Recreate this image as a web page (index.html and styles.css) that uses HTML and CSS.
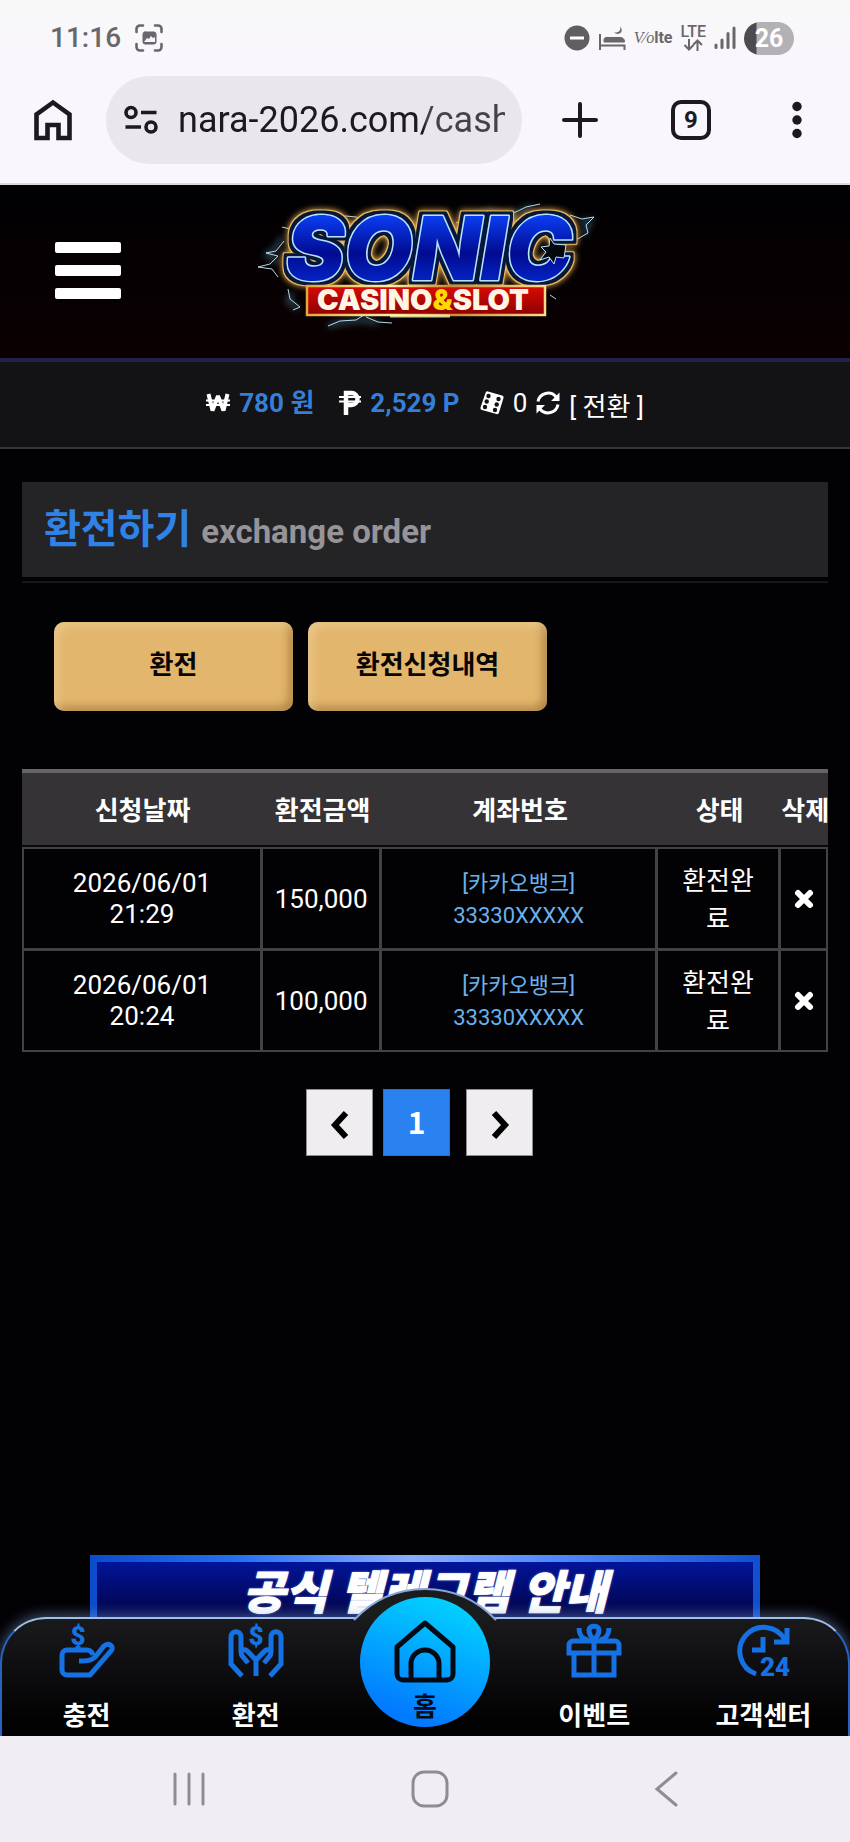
FILE: index.html
```html
<!DOCTYPE html>
<html lang="ko">
<head>
<meta charset="utf-8">
<meta name="viewport" content="width=device-width, initial-scale=1">
<title>환전하기</title>
<link rel="stylesheet" href="styles.css">
</head>
<body>
<div class="status-bar">
  <span class="clock">11:16</span>
  <svg class="capture" width="28" height="28" viewBox="0 0 28 28" fill="none" stroke="#69676b" stroke-width="2.6" stroke-linecap="round">
    <path d="M1.500 8V5a3.500 3.500 0 0 1 3.500-3.500h3M20 1.500h3A3.500 3.500 0 0 1 26.500 5v3M26.500 20v3a3.500 3.500 0 0 1-3.500 3.500h-3M8 26.500H5A3.500 3.500 0 0 1 1.500 23v-3"/>
    <rect x="8" y="8" width="13" height="12" rx="2" fill="#69676b" stroke-width="1"/>
    <path d="M9 18l3-4 2 1 2-3 2 2 2-1v5z" fill="#f8f6fa" stroke="none"/>
  </svg>
  <div class="status-icons">
    <svg width="26" height="26" viewBox="0 0 26 26"><circle cx="13" cy="13" r="12.500" fill="#605e63"/><path d="M6 13h14" stroke="#fff" stroke-width="3"/></svg>
    <svg width="28" height="26" viewBox="0 0 28 26" fill="none" stroke="#69676b" stroke-width="2"><path d="M2 9v16M2 20.500h24.500V25"/><path d="M6 17v-2.500c0-1 1-2 2-2h14c3 0 4.500 1.500 4.500 4.500z" fill="#69676b" stroke-width="1"/><path d="M22 1c1.500 4-1 7-6 6.500 4 3.500 11 0 6-6.500z" fill="#69676b" stroke="none"/></svg>
    <span class="volte"><i>V⁄o</i><b>lte</b></span>
    <span class="lte">LTE<svg width="20" height="12" viewBox="0 0 20 12" fill="none" stroke="#69676b" stroke-width="2"><path d="M6 0v10.500M1.500 6L6 10.500 10.500 6M14.500 12V1.500M10 6l4.500-4.500L19 6"/></svg></span>
    <svg width="22" height="24" viewBox="0 0 22 24" stroke="#69676b" stroke-width="3" stroke-linecap="round"><path d="M2 19v2.500M8 14v7.500M14 7.500v14M20 2v19.500"/></svg>
    <span class="battery">26</span>
  </div>
</div>
<div class="toolbar">
  <button class="tool tool-home" aria-label="홈페이지"><svg width="38" height="42" viewBox="0 0 38 42"><path d="M2.500 39V15.500L19 3.500l16.500 12V39H24.500V26h-11v13z" fill="none" stroke="#1c1a1f" stroke-width="4.600"/></svg></button>
  <div class="address">
    <svg width="34" height="28" viewBox="0 0 34 28" fill="none" stroke="#1c1a1f" stroke-width="3.600"><circle cx="7" cy="6.500" r="5"/><path d="M17 6.500h15.500M1.500 21H17"/><circle cx="27" cy="21" r="5"/></svg>
    <input class="url" type="text" aria-label="주소" value="nara-2026.com/cash">
  </div>
  <button class="tool tool-add" aria-label="새 탭"><svg width="36" height="36" viewBox="0 0 36 36"><path d="M18 2v32M2 18h32" stroke="#1c1a1f" stroke-width="4" stroke-linecap="round"/></svg></button>
  <button class="tool tool-tabs" aria-label="탭 9개"><span class="tab-count">9</span></button>
  <button class="tool tool-menu" aria-label="메뉴"><svg width="12" height="38" viewBox="0 0 12 38" fill="#1c1a1f"><circle cx="6" cy="5.500" r="4.700"/><circle cx="6" cy="19" r="4.700"/><circle cx="6" cy="32.500" r="4.700"/></svg></button>
</div>

<header class="site-header">
  <button class="burger" aria-label="전체 메뉴"><span></span><span></span><span></span></button>
  <svg class="logo" width="380" height="150" viewBox="0 0 380 150" role="img" aria-label="Sonic Casino &amp; Slot">
    <defs>
      <linearGradient id="blue" x1="0" y1="0" x2="0" y2="1"><stop offset="0.200" stop-color="#0a3cf0"/><stop offset="0.550" stop-color="#020b90"/><stop offset="0.850" stop-color="#0426cc"/></linearGradient>
      <linearGradient id="gold" x1="0" y1="0" x2="1" y2="0"><stop offset="0" stop-color="#e8a53c"/><stop offset="0.350" stop-color="#fff0a0"/><stop offset="0.600" stop-color="#c88a3a"/><stop offset="1" stop-color="#ffd98a"/></linearGradient>
      <linearGradient id="red" x1="0" y1="0" x2="0" y2="1"><stop offset="0" stop-color="#d80c04"/><stop offset="1" stop-color="#8e0000"/></linearGradient>
      <filter id="glow" x="-20%" y="-50%" width="140%" height="200%"><feGaussianBlur stdDeviation="3"/></filter>
      <filter id="outline" x="-10%" y="-20%" width="120%" height="140%" color-interpolation-filters="sRGB">
        <feMorphology in="SourceAlpha" operator="dilate" radius="3" result="d1"/>
        <feMorphology in="SourceAlpha" operator="dilate" radius="4" result="d2"/>
        <feFlood flood-color="#06173c"/><feComposite in2="d1" operator="in" result="navy"/>
        <feFlood flood-color="#f0b858"/><feComposite in2="d2" operator="in" result="rim"/>
        <feGaussianBlur in="rim" stdDeviation="3" result="halo"/>
        <feMerge><feMergeNode in="halo"/><feMergeNode in="rim"/><feMergeNode in="navy"/><feMergeNode in="SourceGraphic"/></feMerge>
      </filter>
    </defs>
    <g fill="none" stroke="#5fa5c4" stroke-width="5" opacity="0.400" filter="url(#glow)">
      <path d="M42 46l-5 10-10 8 12 8M52 102l-4 8 10 8M88 135l16-4 20-2 14 3M230 28l20-8 16 6 26-11M340 30l10 0-6 14"/>
    </g>
    <g fill="none" stroke="#c8efff" stroke-width="1" opacity="0.900">
      <path d="M42 36l8 2M44 50l-8 10-10 2 12 3-8 8-12 3 14 2 6 8M48 98l2 10 10 8-7 3M88 135l12-5 16-1 8-5M126 126l12 5 14 1M94 28l12-3 10 1 14 4M216 32l16-8 20-3 12 5 14-6 8-4 14-3M330 24l12 4 12-2-8 8 2 8-14 8M310 104l6 4"/>
    </g>
    <text class="logo-main" x="189" y="89" filter="url(#outline)">SONIC</text>
    <path d="M326 54l-12-1-4-6-1 8-8 1 5 5-6 8 9-3 5 7 2-7 8 1z" fill="#05070f" stroke="#b9e4ff" stroke-width="1"/>
    <rect x="67" y="95" width="238" height="29" fill="url(#red)" stroke="url(#gold)" stroke-width="2.500"/>
    <path d="M150 125h60" stroke="#fff6b0" stroke-width="3" opacity="0.800"/>
    <text class="logo-sub" x="183" y="119" fill="#fff5e6">CASINO<tspan fill="#ffd900">&amp;</tspan>SLOT</text>
  </svg>
</header>

<div class="wallet">
  <svg width="24" height="20" viewBox="0 0 24 20" fill="none" stroke="#fff"><path d="M2.500 1l4 16.500L12 3l5.500 14.500L21.500 1" stroke-width="4" stroke-linejoin="bevel"/><path d="M0 7.500h24M0 12h24" stroke-width="2"/></svg>
  <strong class="amount won">780 원</strong>
  <svg width="22" height="24" viewBox="0 0 22 24" fill="none" stroke="#fff"><path d="M7 24V2h5.500a5.800 5.800 0 0 1 0 12H7" stroke-width="4.500"/><path d="M0 6h22M0 10.500h22" stroke-width="2"/></svg>
  <strong class="amount point">2,529 P</strong>
  <svg class="dice" width="24" height="24" viewBox="0 0 24 24"><path d="M8 .500l14 4a2 2 0 0 1 1.500 2.500l-4.500 14.500a2 2 0 0 1-2.500 1.500L2 19a2 2 0 0 1-1.500-2.500L5.500 2A2 2 0 0 1 8 .500z" fill="#fff"/><g fill="#131214"><circle cx="8.500" cy="5" r="2.200"/><circle cx="6.700" cy="10.500" r="2.200"/><circle cx="5" cy="16" r="2.200"/><circle cx="18.500" cy="8" r="2.200"/><circle cx="16.700" cy="13.500" r="2.200"/><circle cx="15" cy="19" r="2.200"/></g></svg>
  <span>0</span>
  <svg class="refresh" width="24" height="24" viewBox="0 0 24 24" fill="none" stroke="#fff" stroke-width="3"><path d="M2 10.500A10.200 10.200 0 0 1 20 6M22 13.500A10.200 10.200 0 0 1 4 18"/><path d="M23.500 1.500v8.500H15zM.500 22.500V14H9z" fill="#fff" stroke="none"/></svg>
  <a class="convert" href="#">[ 전환 ]</a>
</div>

<main class="content">
  <div class="title-wrap"><h1 class="title">환전하기 <small>exchange order</small></h1></div>
  <div class="actions">
    <button class="gold-button">환전</button>
    <button class="gold-button">환전신청내역</button>
  </div>
  <table class="history">
    <colgroup><col class="c-date"><col class="c-sum"><col class="c-account"><col class="c-state"><col class="c-delete"></colgroup>
    <thead><tr><th>신청날짜</th><th>환전금액</th><th>계좌번호</th><th>상태</th><th>삭제</th></tr></thead>
    <tbody>
      <tr><td class="date">2026/06/01<br>21:29</td><td>150,000</td><td class="account">[카카오뱅크]<br>33330XXXXX</td><td class="state">환전완료</td>
        <td><button class="delete" aria-label="삭제"><svg width="20" height="20" viewBox="0 0 20 20"><path d="M4 4l12 12M16 4L4 16" stroke="#fff" stroke-width="6" stroke-linecap="round"/></svg></button></td></tr>
      <tr><td class="date">2026/06/01<br>20:24</td><td>100,000</td><td class="account">[카카오뱅크]<br>33330XXXXX</td><td class="state">환전완료</td>
        <td><button class="delete" aria-label="삭제"><svg width="20" height="20" viewBox="0 0 20 20"><path d="M4 4l12 12M16 4L4 16" stroke="#fff" stroke-width="6" stroke-linecap="round"/></svg></button></td></tr>
    </tbody>
  </table>
  <nav class="pages" aria-label="페이지">
    <button class="page" aria-label="이전"><svg width="20" height="30" viewBox="0 0 20 30"><path d="M16 3L5 15l11 12" fill="none" stroke="#000" stroke-width="6"/></svg></button>
    <button class="page current">1</button>
    <button class="page next" aria-label="다음"><svg width="20" height="30" viewBox="0 0 20 30"><path d="M4 3l11 12L4 27" fill="none" stroke="#000" stroke-width="6"/></svg></button>
  </nav>
</main>

<a class="banner" href="#">공식 텔레그램 안내</a>

<nav class="dock">
  <svg class="bump" width="144" height="32" viewBox="0 0 144 32"><path d="M1 32C18 14 40 1 72 1s54 13 71 31" fill="#1a1c1e" stroke="#86a5d8" stroke-width="2"/></svg>
  <a class="dock-item" href="#">
    <svg width="54" height="54" viewBox="0 0 54 54" fill="none" stroke="#1672e4" stroke-width="5"><text class="icon-text" x="18" y="21">$</text><path d="M33 31c-1-3-3-5-6-5H7a5 5 0 0 0-5 5v15a5 5 0 0 0 5 5h23l21-24c4-5-3-9-7-5l-8 10c-4 5-10 5-17 5M18 22v4"/></svg>
    <span>충전</span></a>
  <a class="dock-item" href="#">
    <svg width="54" height="54" viewBox="0 0 54 54" fill="none" stroke="#1672e4" stroke-width="5"><text class="icon-text" x="27" y="21">$</text><path d="M13 52L2 40V13c0-7 10-7 10 0v15c0 3 1 4 2 5l5 6M14 26c4-1 5 2 13 10v16M41 52l11-12V13c0-7-10-7-10 0v15c0 3-1 4-2 5l-5 6M40 26c-4-1-5 2-13 10"/></svg>
    <span>환전</span></a>
  <a class="dock-item dock-home" href="#">
    <span class="home-disc">
      <svg width="64" height="64" viewBox="0 0 64 64" fill="none" stroke="#020a14" stroke-width="5" stroke-linejoin="round"><path d="M32 4L4 28v27a6 6 0 0 0 6 6h44a6 6 0 0 0 6-6V28zM18 61V45a14 14 0 0 1 28 0v16"/></svg>
      <span>홈</span>
    </span></a>
  <a class="dock-item" href="#">
    <svg width="54" height="54" viewBox="0 0 54 54" fill="none" stroke="#1672e4" stroke-width="5"><path d="M2 29V21a4 4 0 0 1 4-4h42a4 4 0 0 1 4 4v8zM7 30v21h40V30M27 17v34M27 16c-4-4-5-7-5-10 0-5 10-5 10 0 0 3-1 6-5 10zM12 4c0 6 3 11 9 12M42 4c0 6-3 11-9 12"/></svg>
    <span>이벤트</span></a>
  <a class="dock-item" href="#">
    <svg width="54" height="54" viewBox="0 0 54 54" fill="none" stroke="#1672e4" stroke-width="5"><path d="M20 50A24 24 0 1 1 49 16M51 4v14H38M27 13v13H16"/><text class="icon-text" x="39" y="52">24</text></svg>
    <span>고객센터</span></a>
</nav>
<div class="system-nav">
  <button aria-label="최근 앱"><svg width="36" height="36" viewBox="0 0 36 36"><path d="M4 3v30M18 3v30M32 3v30" stroke="#8f8d92" stroke-width="3" stroke-linecap="round"/></svg></button>
  <button aria-label="홈 화면"><svg width="38" height="38" viewBox="0 0 38 38"><rect x="2" y="2" width="34" height="34" rx="11" fill="none" stroke="#8f8d92" stroke-width="3"/></svg></button>
  <button aria-label="뒤로"><svg width="26" height="38" viewBox="0 0 26 38"><path d="M23 3L4 19l19 16" fill="none" stroke="#8f8d92" stroke-width="3" stroke-linecap="round"/></svg></button>
</div>
</body>
</html>
```

FILE: styles.css
```css
* { box-sizing: border-box; }
body {
  margin: 0;
  min-height: 100vh;
  display: flex;
  flex-direction: column;
  background: #020104;
  color: #fff;
  font: 26px/32px Roboto, "Noto Sans CJK KR", sans-serif;
}
button { margin: 0; padding: 0; border: 0; background: none; color: inherit; font: inherit; }
a { color: inherit; text-decoration: none; }
svg { flex: none; display: block; overflow: visible; }

.status-bar {
  display: flex;
  align-items: center;
  height: 76px;
  padding: 0 56px 0 50px;
  background: linear-gradient(#f8f8f8, #f9f7fb 40px);
  color: #69676b;
}
.clock { font-size: 28px; font-weight: 500; }
.capture { margin-left: 14px; }
.status-icons { display: flex; align-items: center; gap: 8px; margin-left: auto; }
.volte { font-size: 16px; line-height: 24px; }
.volte i { font-family: "Liberation Serif", serif; }
.lte { display: flex; flex-direction: column; align-items: center; font-size: 16px; line-height: 14px; font-weight: 500; }
.battery {
  width: 50px;
  height: 33px;
  border-radius: 17px;
  background: linear-gradient(90deg, #4d4b4f 12px, #b3b1b5 13px);
  color: #fff;
  font-size: 25px;
  line-height: 33px;
  font-weight: 700;
  text-align: center;
}
.toolbar {
  display: flex;
  align-items: center;
  height: 109px;
  padding-bottom: 19px;
  background: #f9f7fd;
  border-bottom: 2px solid #dddbdf;
  color: #1c1a1f;
}
.tool { display: flex; justify-content: center; align-items: center; }
.tool-home { width: 106px; }
.tool-add { width: 116px; }
.tool-tabs, .tool-menu { width: 106px; }
.address {
  flex: 1;
  min-width: 0;
  display: flex;
  align-items: center;
  gap: 20px;
  height: 88px;
  padding: 0 17px 0 18px;
  border-radius: 44px;
  background: #e9e7ec;
}
.url {
  flex: 1;
  min-width: 0;
  padding: 0;
  border: 0;
  outline: 0;
  background: none;
  color: #1c1a1f;
  font: 36px/44px Roboto, sans-serif;
  -webkit-mask-image: linear-gradient(90deg, #000 75%, rgba(0, 0, 0, 0.8) 76%);
  mask-image: linear-gradient(90deg, #000 75%, rgba(0, 0, 0, 0.8) 76%);
}
.tab-count {
  width: 40px;
  height: 40px;
  border: 4px solid #1c1a1f;
  border-radius: 10px;
  font-size: 24px;
  line-height: 32px;
  font-weight: 700;
}

.site-header {
  display: grid;
  grid-template-columns: 1fr auto 1fr;
  align-items: center;
  height: 177px;
  padding: 0 0 12px;
  background: linear-gradient(#010003, #0b0002);
  border-bottom: 4px solid #202348;
}
.burger { display: flex; flex-direction: column; gap: 12px; width: 66px; margin: 10px 0 0 55px; }
.burger span { height: 11px; border-radius: 2px; background: #fff; }
.logo { margin-left: 10px; }
.logo-main {
  font: italic 900 88px Inter, sans-serif;
  text-anchor: middle;
  fill: url(#blue);
  stroke: #b9e4ff;
  stroke-width: 3px;
  stroke-linejoin: round;
  paint-order: stroke;
}
.logo-sub { font: 900 29px Inter, sans-serif; text-anchor: middle; }

.wallet {
  display: flex;
  justify-content: center;
  align-items: center;
  gap: 9px;
  height: 87px;
  padding-bottom: 4px;
  background: #131214;
  border-bottom: 2px solid #363538;
}
.amount { color: #367fd8; font-weight: 700; }
.won { margin-right: 16px; }
.point { margin-right: 11px; }
.convert { margin-top: 8px; }

.content { flex: 1; padding: 33px 22px 0; }
.title-wrap { padding-bottom: 4px; border-bottom: 2px solid #171619; }
.title {
  height: 95px;
  margin: 0;
  padding-left: 22px;
  background: #242326;
  color: #2f82e6;
  font-size: 40px;
  line-height: 96px;
  font-weight: 700;
}
.title small { color: #969498; font-size: 33px; }
.actions { display: flex; gap: 15px; padding: 39px 32px 58px; }
.gold-button {
  width: 239px;
  height: 89px;
  padding-bottom: 4px;
  border-radius: 10px;
  background: #e3b66d;
  box-shadow: inset 4px 4px 8px rgba(240, 215, 165, 0.6), inset -4px -4px 8px rgba(120, 85, 30, 0.5);
  color: #080604;
  font-size: 26px;
  font-weight: 700;
}
.history { width: 100%; table-layout: fixed; border-spacing: 0; text-align: center; }
.c-date { width: 29.900%; }
.c-sum { width: 14.800%; }
.c-account { width: 34.200%; }
.c-state { width: 15.300%; }
.c-delete { width: 5.800%; }
.history th {
  height: 78px;
  padding: 4px 0 0;
  border-top: 4px solid #666467;
  border-bottom: 2px solid #09080a;
  background: #353336;
  font-weight: 700;
  white-space: nowrap;
}
.history td {
  height: 101px;
  padding: 0;
  border: solid #434145;
  border-width: 0 3px 3px 0;
}
.history td:first-child { border-left-width: 2px; }
.history td:last-child { border-right-width: 2px; }
.history tbody tr:first-child td { height: 104px; border-top-width: 2px; }
.history tbody tr:last-child td { border-bottom-width: 2px; }
.history .date { line-height: 31px; }
.history .account { padding-top: 2px; color: #69b1ec; font-size: 22px; }
.history .state { padding: 2px 20px 0; line-height: 38px; word-break: break-all; }
.delete { display: block; margin: 0 auto; }

.pages { display: flex; justify-content: center; gap: 10px; padding: 37px 11px 0 0; }
.page {
  display: flex;
  justify-content: center;
  align-items: center;
  width: 67px;
  height: 67px;
  padding-top: 4px;
  background: #efedf0;
  border: 1px solid #8e8c90;
  color: #000;
}
.page.current {
  padding: 0 0 4px;
  background: #2a82f0;
  border-color: #2a6fc4;
  color: #fff;
  font: 700 30px/40px "Noto Sans CJK KR", sans-serif;
}
.page.next { margin-left: 6px; }

.banner {
  height: 62px;
  margin: 0 90px;
  border: 7px solid;
  border-bottom: 0;
  border-image: linear-gradient(90deg, #0a4ccc, #2370f2 22%, #8aaeff 48%, #5a90ff 65%, #0f4fd0) 7;
  background: linear-gradient(#02149a, #010446);
  color: #fff;
  font: italic 900 46px/54px "Noto Sans CJK KR", sans-serif;
  text-align: center;
  white-space: nowrap;
  -webkit-text-stroke: 1px #fff;
  text-shadow: 0 0 3px #7d94e8;
}
.dock {
  position: relative;
  display: grid;
  grid-template-columns: repeat(5, 1fr);
  height: 119px;
  border: 2px solid #2863c0;
  border-top-color: #9fc0e8;
  border-bottom: 0;
  border-radius: 46px 46px 0 0;
  background: linear-gradient(#1a1a1d, #020203 85%);
  box-shadow: 0 -2px 14px rgba(130, 165, 215, 0.5);
}
.bump { position: absolute; top: -31px; left: 50%; transform: translateX(-50%); }
.dock-item {
  display: flex;
  flex-direction: column;
  align-items: center;
  justify-content: space-between;
  padding: 5px 0 4px;
  font-weight: 700;
  white-space: nowrap;
}
.dock-home { position: relative; }
.home-disc {
  position: absolute;
  top: -22px;
  display: flex;
  flex-direction: column;
  align-items: center;
  justify-content: space-between;
  width: 130px;
  height: 130px;
  padding: 22px 0 4px;
  border-radius: 50%;
  background: linear-gradient(200deg, #02d4ff 8%, #0279ff 85%);
  color: #020a14;
}
.icon-text { font: 900 26px Roboto, sans-serif; fill: #1672e4; stroke: none; text-anchor: middle; }
.system-nav {
  position: relative;
  display: flex;
  justify-content: center;
  align-items: center;
  gap: 204px;
  height: 106px;
  background: #f0eef2;
}
```
